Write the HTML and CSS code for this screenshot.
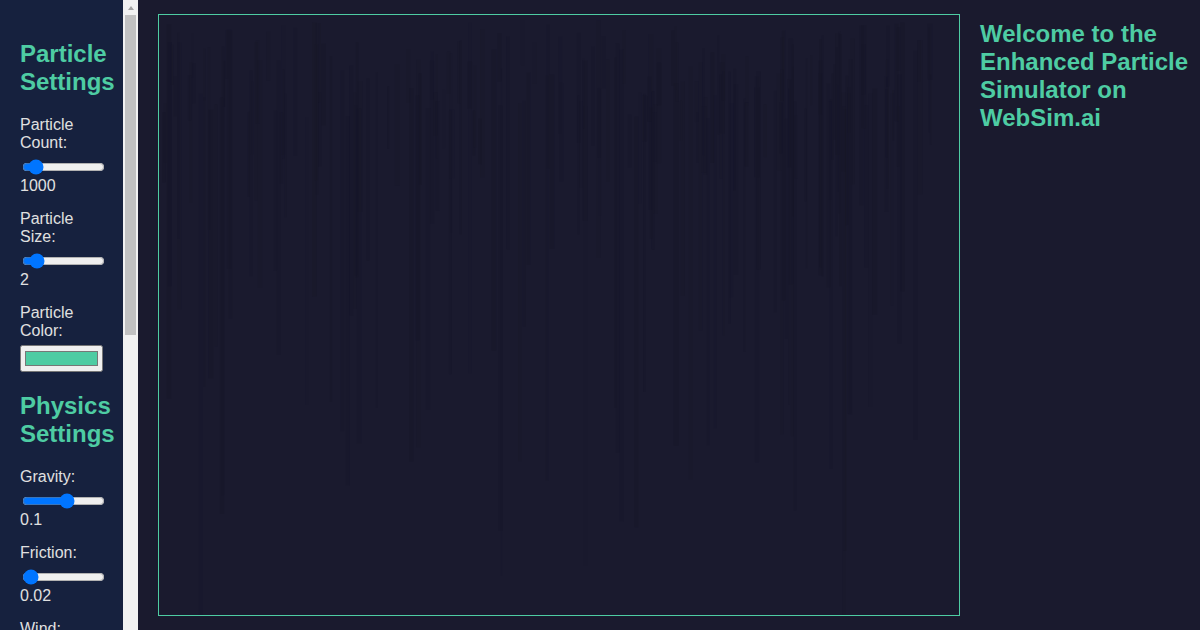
FILE: index.html
```html
<!DOCTYPE html>
<html lang="en">
<head>
  <meta charset="UTF-8">
  <title>Enhanced Particle Simulator</title>
  <link rel="stylesheet" href="styles.css">
</head>
<body>

  <div class="sidebar">
    <div class="controls">
      <h2>Particle Settings</h2>

      <div class="control">
        <label for="particleCount">Particle Count:</label>
        <input type="range" id="particleCount" min="100" max="10000" value="1000">
        <span>1000</span>
      </div>

      <div class="control">
        <label for="particleSize">Particle Size:</label>
        <input type="range" id="particleSize" min="1" max="10" value="2">
        <span>2</span>
      </div>

      <div class="control">
        <label for="particleColor">Particle Color:</label>
        <input type="color" id="particleColor" value="#4ecca3">
      </div>

      <h2>Physics Settings</h2>

      <div class="control">
        <label for="gravity">Gravity:</label>
        <input type="range" id="gravity" min="-1" max="1" step="0.01" value="0.1">
        <span>0.1</span>
      </div>

      <div class="control">
        <label for="friction">Friction:</label>
        <input type="range" id="friction" min="0" max="1" step="0.01" value="0.02">
        <span>0.02</span>
      </div>

      <div class="control">
        <label for="wind">Wind:</label>
        <input type="range" id="wind" min="-1" max="1" step="0.01" value="0">
        <span>0</span>
      </div>

      <h2>Interaction Settings</h2>

      <div class="control">
        <label for="mouseForce">Mouse Force:</label>
        <input type="range" id="mouseForce" min="0" max="10" step="0.1" value="1">
        <span>1</span>
      </div>
    </div>

    <div class="scrollbar">
      <div class="scroll-up"></div>
      <div class="scroll-thumb"></div>
    </div>
  </div>

  <div class="main">
    <canvas id="sim" width="800" height="600"></canvas>
    <div class="info">
      <h2>Welcome to the Enhanced Particle Simulator on WebSim.ai</h2>
    </div>
  </div>

  <script src="script.js"></script>
</body>
</html>
```

FILE: styles.css
```css
body {
  margin: 0;
  font-family: "Liberation Sans", Arial, sans-serif;
  background: #1a1a2e;
  color: #e0e0e0;
  display: flex;
  height: 100vh;
  overflow: hidden;
}

h2 {
  color: #4ecca3;
  font-size: 24px;
}

.sidebar {
  display: flex;
  flex-shrink: 0;
  height: 100vh;
}

.controls {
  width: 123px;
  box-sizing: border-box;
  padding: 20px;
  background: #16213e;
  overflow: hidden;
}

.scrollbar {
  width: 15px;
  background: #f1f1f1;
  display: flex;
  flex-direction: column;
  align-items: center;
}

.scroll-up {
  width: 0;
  height: 0;
  margin: 6px 0 5px;
  border-left: 3.5px solid transparent;
  border-right: 3.5px solid transparent;
  border-bottom: 4px solid #a3a3a3;
}

.scroll-thumb {
  width: 11px;
  height: 320px;
  background: #c1c1c1;
}

.control {
  margin-bottom: 15px;
}

.control label {
  display: block;
  margin-bottom: 5px;
}

.control input[type="range"] {
  display: block;
  width: 100%;
  box-sizing: border-box;
  margin: 7.5px 2px 1.5px;
}

.control input[type="color"] {
  display: block;
  width: 100%;
}

.main {
  flex: 1;
  display: flex;
  align-items: center;
  gap: 20px;
  padding-left: 20px;
}

canvas {
  border: 1px solid #4ecca3;
  background: #1a1a2e;
}

.info {
  align-self: flex-start;
  flex: 1;
}

.info h2 {
  margin-top: 20px;
}
```

FILE: script.js
```js
const canvas = document.getElementById('sim');
const ctx = canvas.getContext('2d');

let seed = 7;
function rand() {
  seed = (seed * 16807) % 2147483647;
  return seed / 2147483647;
}

// faint trails left by falling particles
for (let i = 0; i < 220; i++) {
  const x = 5 + rand() * 770;
  const top = 5 + rand() * 100;
  const len = 40 + rand() * 500 * rand();
  ctx.strokeStyle = 'rgba(22, 22, 40, ' + (0.15 + rand() * 0.25) + ')';
  ctx.lineWidth = 2 + rand() * 3;
  ctx.beginPath();
  ctx.moveTo(x, top);
  ctx.lineTo(x, top + len);
  ctx.stroke();
}
```
